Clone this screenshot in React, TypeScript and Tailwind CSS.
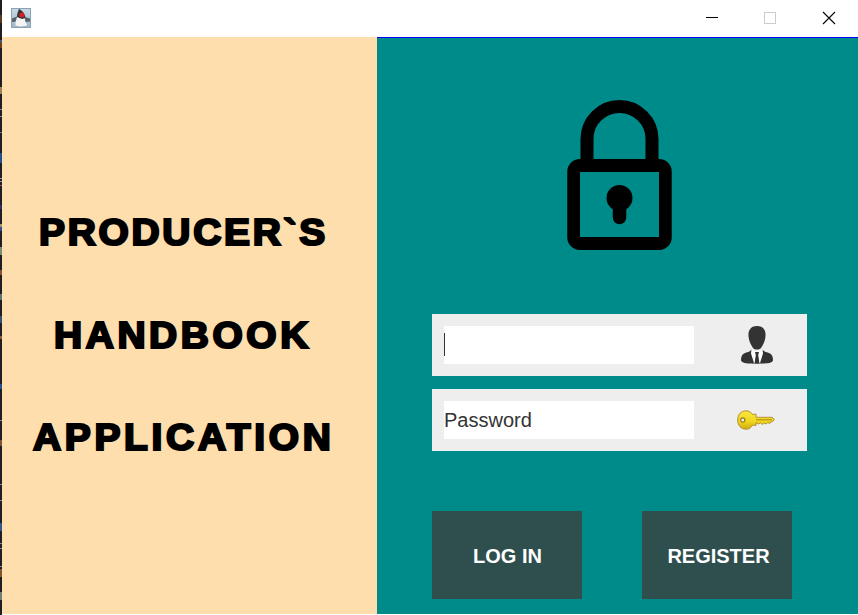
import React from "react";

const edgeMarks: [number, number, string][] = [
  [15, 8, "#5a3a20"], [40, 2, "#3c5c88"], [42, 6, "#6e3f1e"], [87, 7, "#a08055"], [109, 1, "#8a8a90"],
  [116, 1, "#8a8a90"], [132, 1, "#77777c"], [153, 10, "#24508a"], [178, 1, "#999999"],
  [181, 1, "#999999"], [185, 1, "#a05050"], [205, 4, "#303068"], [224, 3, "#a09a60"],
  [227, 4, "#3a4a90"], [247, 8, "#7c8c70"], [270, 5, "#8a5030"], [294, 6, "#5d7468"],
  [316, 7, "#34506a"], [336, 3, "#8a5a38"], [384, 5, "#24508a"], [420, 1, "#888888"],
  [440, 6, "#7a5535"], [484, 1, "#888888"], [500, 1, "#888888"], [523, 8, "#34568a"],
  [543, 1, "#888888"], [548, 1, "#888888"], [566, 1, "#888888"], [569, 8, "#85532a"],
  [592, 8, "#6f8070"],
];

function JavaIcon() {
  return (
    <svg width="20" height="20" viewBox="0 0 20 20">
      <defs>
        <linearGradient id="jb" x1="0" y1="0" x2="0" y2="1">
          <stop offset="0" stopColor="#c9d9e5" />
          <stop offset="1" stopColor="#9fb5c6" />
        </linearGradient>
      </defs>
      <rect x=".5" y=".5" width="19" height="19" fill="url(#jb)" stroke="#8aa3b5" />
      <path d="M1 10.500l5-2 1 5-6 .5zM13.500 9l5.500 1.500v3l-5 .5z" fill="#5a6268" />
      <path d="M6.500 8c-1 3-2.500 6-2 9.500l4 1 5-.5c3 0 3-1 1.500-3-1-2-1-4-1.500-6l-4-3z" fill="#f4f4f4" />
      <path d="M8 1c2 1 5.500 3 6.500 9l-3.500 1-5-2c0-3 1-6 2-8z" fill="#303336" />
      <circle cx="10.800" cy="7" r="2.500" fill="#d9201c" />
    </svg>
  );
}

function LockIcon() {
  return (
    <svg width="106" height="151" viewBox="0 0 106 151" className="block">
      <path d="M20 65V39a32.500 32.500 0 0 1 65 0V65" fill="none" stroke="#000" strokeWidth="13" />
      <rect x="6.750" y="65.500" width="91.500" height="78" rx="6" fill="none" stroke="#000" strokeWidth="13" />
      <path d="M13 72h79v65H13z" fill="#008b8b" />
      <circle cx="52.500" cy="98" r="13" />
      <path d="M52.500 98v19.500" stroke="#000" strokeWidth="13.500" strokeLinecap="round" />
    </svg>
  );
}

function UserIcon() {
  return (
    <svg width="32" height="38" viewBox="0 0 32 38" fill="#333">
      <path d="M16 0c6 0 9 4 8.500 10-.2 5-2.500 9-4.500 12-2 2-6 2-8 0-2-3-4.300-7-4.500-12C7 4 10 0 16 0z" />
      <path d="M10.500 23.500l3 11-2 3C5 37.500 1 37 0 34.500c0-3 .5-5.500 3-7 3-1.500 6-1.500 7.500-4z" />
      <path d="M21.500 23.500l-3 11 2 3c6.500 0 10.500-.5 11.500-3 0-3-.5-5.500-3-7-3-1.500-6-1.500-7.500-4z" />
      <path d="M11 35h10v2.500H11z" />
      <path d="M10.500 23.500l5.500 2.500 5.500-2.500 .5 4-3 9.500h-6l-3-9.500z" fill="#fff" />
      <path d="M14 26h4l-.8 3 1.300 8.500h-5l1.300-8.500z" />
    </svg>
  );
}

function KeyIcon() {
  return (
    <svg width="38" height="20" viewBox="0 0 38 20">
      <defs>
        <linearGradient id="kg" x1="0" y1="0" x2="0" y2="1">
          <stop offset="0" stopColor="#f9e640" />
          <stop offset=".6" stopColor="#efd51c" />
          <stop offset="1" stopColor="#d0a80f" />
        </linearGradient>
      </defs>
      <path
        d="M9 .8c3 0 5 1.200 6.500 3.700L19 4v3.300h16l2.300 2-1.600 2.200-2 .5-1 1.500-2-1-1.500 1.500-2-1-1.700 1.500-2-1.500-2 1L19 12.500v3l-3.500-.4C14 18 12 19.200 9 19.200 4 19.200.700 15.500.700 10S4 .8 9 .8z"
        fill="url(#kg)" stroke="#b39235" strokeWidth="1"
      />
      <path d="M19 9.800h16" stroke="#a98518" strokeWidth="1" />
      <circle cx="5.800" cy="10" r="2.100" fill="#eee" stroke="#9a7a18" strokeWidth="1.200" />
    </svg>
  );
}

export default function App() {
  return (
    <div className="flex h-[615px] w-[858px] overflow-hidden bg-white font-['Liberation_Sans',Arial,sans-serif]">
      <div className="relative w-[2px] shrink-0 bg-[#1f1f23]">
        {edgeMarks.map(([top, height, color]) => (
          <i key={top} className="absolute left-0 w-[2px]" style={{ top, height, background: color }} />
        ))}
      </div>
      <div className="flex flex-1 flex-col">
        <header className="flex h-[37px] items-start justify-between">
          <div className="pt-2 pl-[9px]"><JavaIcon /></div>
          <svg width="160" height="37" viewBox="698 0 160 37" fill="none" shapeRendering="crispEdges">
            <path d="M706 17.500h12" stroke="#000" />
            <rect x="764.500" y="12.500" width="11" height="11" stroke="#ccc" />
            <path d="M823 12l12 12M835 12l-12 12" stroke="#000" shapeRendering="auto" strokeWidth="1.100" />
          </svg>
        </header>
        <main className="flex h-[577px]">
          <section className="flex w-[375px] flex-col bg-[#ffdead] pt-[166px] text-[36px] leading-[60px] font-bold whitespace-nowrap text-black [-webkit-text-stroke:2.200px_#000]">
            <div className="ml-[37px] origin-left scale-x-[1.080] tracking-[2.550px]">PRODUCER`S</div>
            <div className="mt-[43px] ml-[52px] origin-left scale-x-[1.080] tracking-[3.350px]">HANDBOOK</div>
            <div className="mt-[42px] ml-[31px] origin-left scale-x-[1.080] tracking-[3.450px]">APPLICATION</div>
          </section>
          <section className="flex flex-1 flex-col border-t border-[#0000ff] bg-[#008b8b]">
            <div className="pt-[62px] pl-[190px]"><LockIcon /></div>
            <div className="mt-[63px] ml-[55px] flex h-[62px] w-[375px] items-center bg-[#eee] pl-3">
              <div className="flex h-[38px] w-[250px] items-start bg-white pt-[7px]">
                <span className="h-[23px] w-px bg-[#333]" />
              </div>
              <div className="ml-[47px]"><UserIcon /></div>
            </div>
            <div className="mt-[13px] ml-[55px] flex h-[62px] w-[375px] items-center bg-[#eee] pl-3">
              <div className="flex h-[38px] w-[250px] items-center bg-white text-[20px] text-[#333]">Password</div>
              <div className="ml-[43px]"><KeyIcon /></div>
            </div>
            <div className="mt-[60px] ml-[55px] flex gap-[60px] text-[20px] font-bold text-white">
              <button className="h-[88px] w-[150px] bg-[#2f4f4f] pt-[2px] pl-[1px]">LOG IN</button>
              <button className="h-[88px] w-[150px] bg-[#2f4f4f] pt-[2px] pl-[3px]">REGISTER</button>
            </div>
          </section>
        </main>
      </div>
    </div>
  );
}
